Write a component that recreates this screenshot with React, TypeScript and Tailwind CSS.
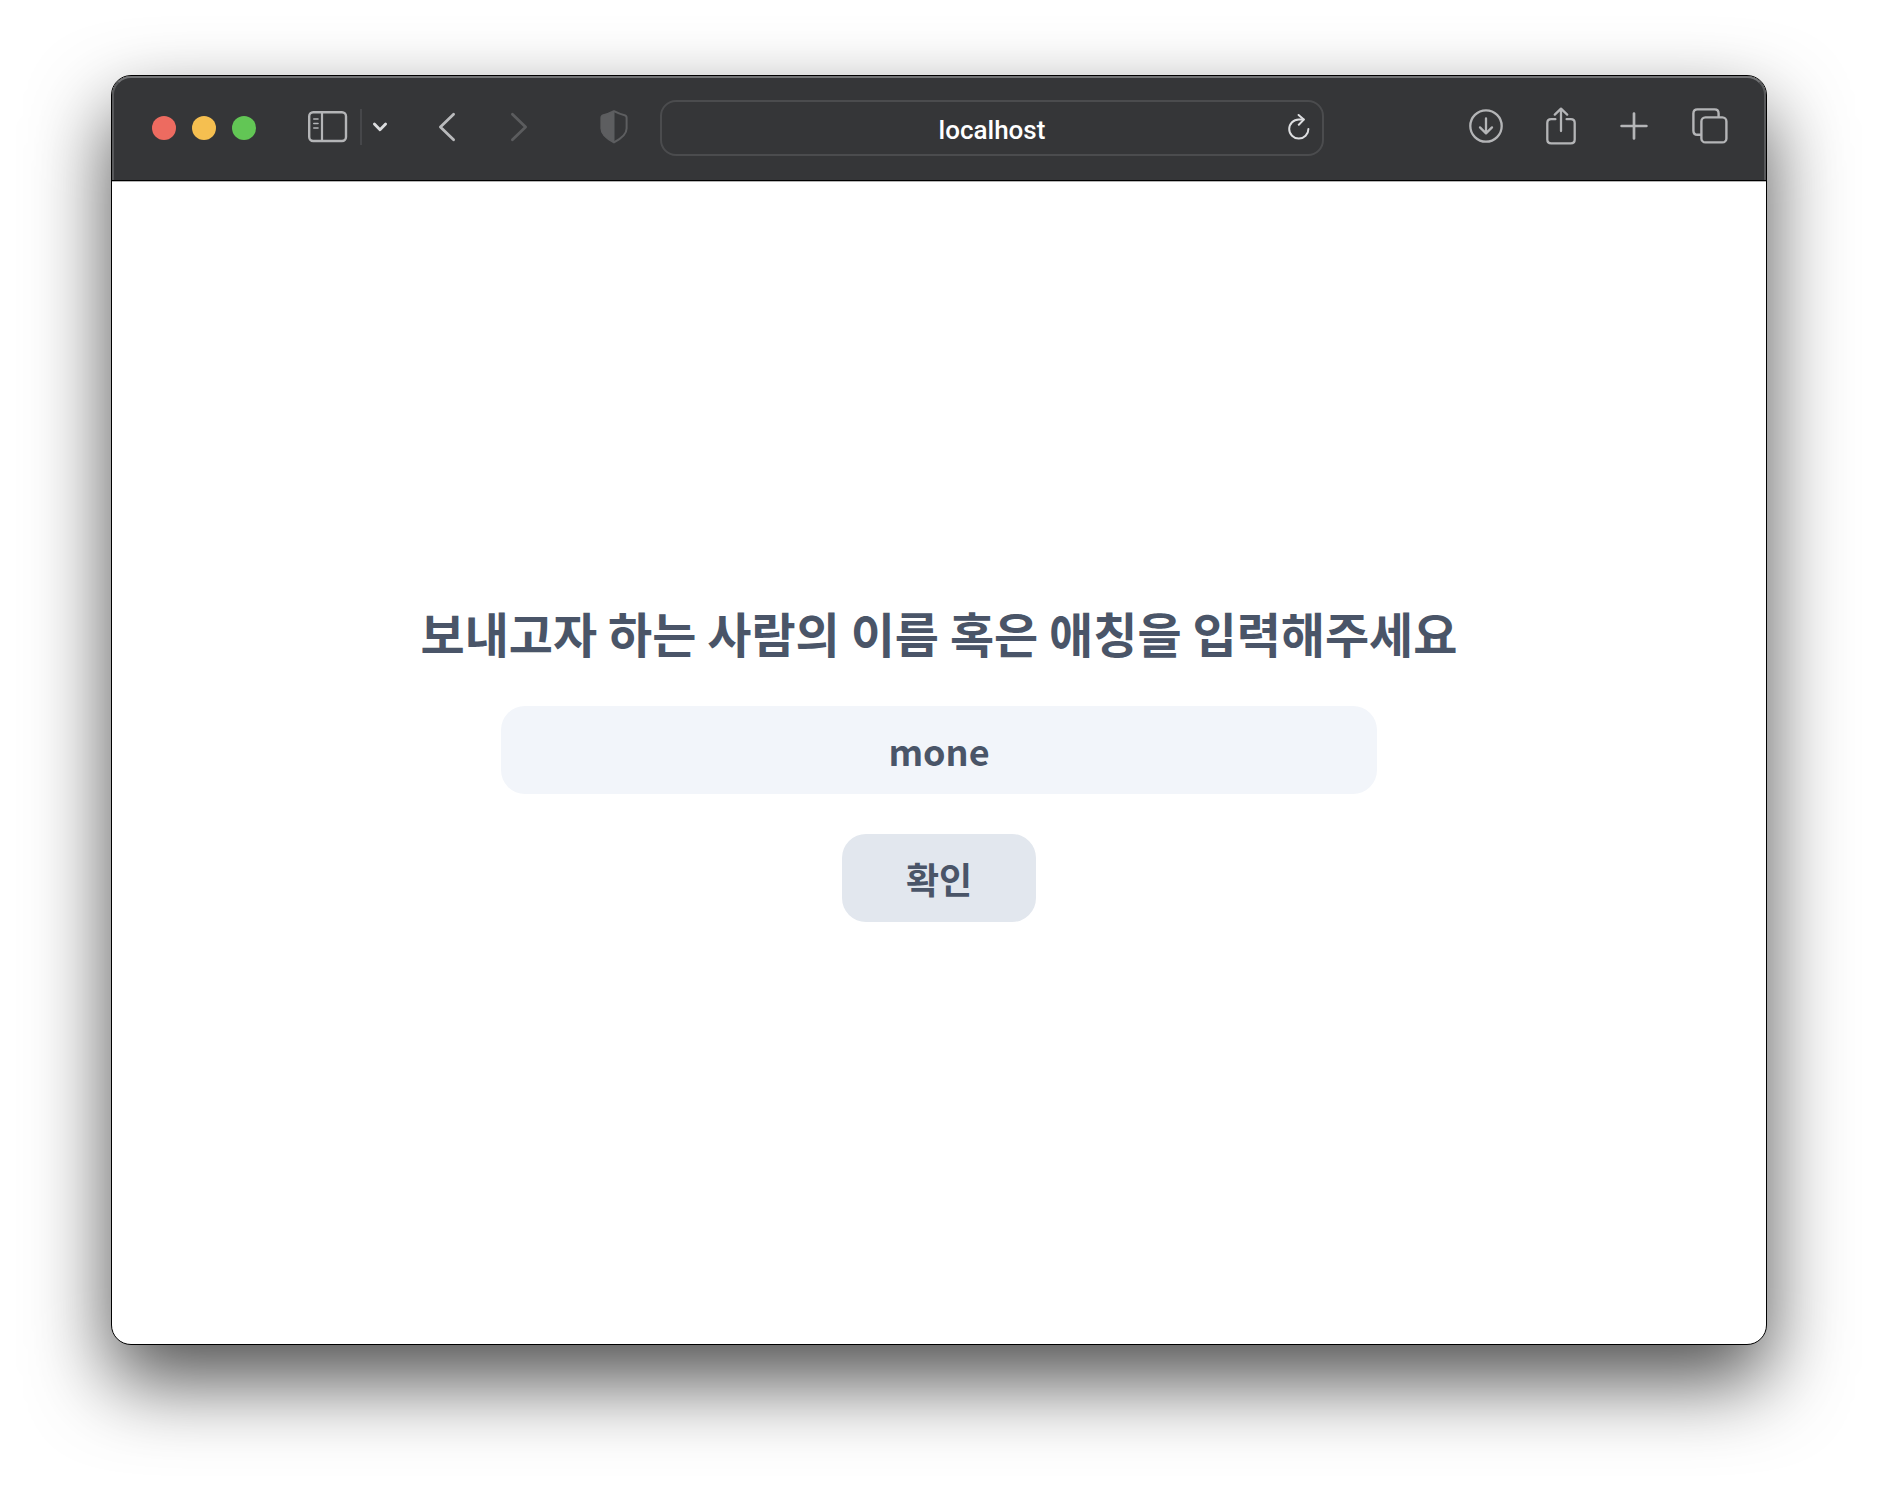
import { useState } from "react";

function SidebarIcon() {
  return (
    <svg width="40" height="32" viewBox="0 0 40 32" fill="none" stroke="#b4b5b7" strokeLinecap="round">
      <rect x="1.2" y="1.2" width="36.8" height="28.8" rx="4" strokeWidth="2.4" />
      <path d="M14 1.5V30" strokeWidth="2.2" strokeLinecap="butt" />
      <path d="M5.8 8H10M5.8 12.5H10M5.8 17H10" strokeWidth="1.6" />
    </svg>
  );
}

function ChevronDownIcon() {
  return (
    <svg width="16" height="12" viewBox="0 0 16 12" fill="none" stroke="#dcdddf" strokeWidth="2.8" strokeLinecap="round" strokeLinejoin="round">
      <path d="M2.4 3L8 8.8L13.6 3" />
    </svg>
  );
}

function BackIcon() {
  return (
    <svg width="18" height="30" viewBox="0 0 18 30" fill="none" stroke="#b9babc" strokeWidth="2.8" strokeLinecap="round" strokeLinejoin="round">
      <path d="M15.6 2.2L2.4 15L15.6 27.8" />
    </svg>
  );
}

function ForwardIcon() {
  return (
    <svg width="18" height="30" viewBox="0 0 18 30" fill="none" stroke="#5b5c5e" strokeWidth="2.8" strokeLinecap="round" strokeLinejoin="round">
      <path d="M2.4 2.2L15.6 15L2.4 27.8" />
    </svg>
  );
}

function ShieldIcon() {
  const outline =
    "M14 1.2C17.4 3 21 4.4 24.6 5.2Q26.6 5.7 26.6 7.8V18.6C26.6 24.6 21 28.8 14 32.4C7 28.8 1.4 24.6 1.4 18.6V7.8Q1.4 5.7 3.4 5.2C7 4.4 10.6 3 14 1.2Z";
  return (
    <svg width="28" height="34" viewBox="0 0 28 34" fill="none" stroke="#5d5e60" strokeWidth="2" strokeLinejoin="round">
      <path d={outline} />
      <path d="M14 1.2V32.4C7 28.8 1.4 24.6 1.4 18.6V7.8Q1.4 5.7 3.4 5.2C7 4.4 10.6 3 14 1.2Z" fill="#5d5e60" strokeWidth="1" />
    </svg>
  );
}

function ReloadIcon() {
  return (
    <svg width="22" height="26" viewBox="0 0 22 26" fill="none" stroke="#dddee0" strokeWidth="2" strokeLinecap="round" strokeLinejoin="round">
      <path d="M20.4 15A9.6 9.6 0 1 1 10.8 5.4H15.6" />
      <path d="M10.6 1L15.8 5.6L10.8 10.8" />
    </svg>
  );
}

function DownloadIcon() {
  return (
    <svg width="34" height="34" viewBox="0 0 34 34" fill="none" stroke="#b4b5b7" strokeWidth="2.3" strokeLinecap="round" strokeLinejoin="round">
      <circle cx="17" cy="17" r="15.7" />
      <path d="M17 9.5V24M11 18.4L17 24.4L23 18.4" />
    </svg>
  );
}

function ShareIcon() {
  return (
    <svg width="30" height="38" viewBox="0 0 30 38" fill="none" stroke="#b4b5b7" strokeWidth="2.3" strokeLinecap="round" strokeLinejoin="round">
      <path d="M9.4 12.2H5.2Q1.3 12.2 1.3 16V32.4Q1.3 36.3 5.2 36.3H24.8Q28.7 36.3 28.7 32.4V16Q28.7 12.2 24.8 12.2H20.6" />
      <path d="M15 24V2M8.8 7.6L15 1.6L21.2 7.6" />
    </svg>
  );
}

function PlusIcon() {
  return (
    <svg width="28" height="28" viewBox="0 0 28 28" fill="none" stroke="#b4b5b7" strokeWidth="2.7" strokeLinecap="round">
      <path d="M14 1.6V26.4M1.6 14H26.4" />
    </svg>
  );
}

function TabsIcon() {
  return (
    <svg width="36" height="36" viewBox="0 0 36 36" fill="none" stroke="#b4b5b7" strokeWidth="2.4" strokeLinejoin="round">
      <path d="M9.4 26.8H5.4Q1.4 26.8 1.4 22.8V5.4Q1.4 1.4 5.4 1.4H22.6Q26.6 1.4 26.6 5.4V9.4" />
      <rect x="9.4" y="9.4" width="25" height="25" rx="4" />
    </svg>
  );
}

function Toolbar() {
  const [address, setAddress] = useState("localhost");
  return (
    <header className="border-b border-black bg-[#353638]">
      <div className="flex h-[104px] items-center rounded-t-[19px] border-x-2 border-t-2 border-x-[#58595b] border-t-[#737476] pr-9 pb-0.5 pl-[38px]">
        <div className="flex gap-4">
          <button type="button" aria-label="Close" className="size-6 rounded-full bg-[#ed6b60]" />
          <button type="button" aria-label="Minimize" className="size-6 rounded-full bg-[#f5bf50]" />
          <button type="button" aria-label="Zoom" className="size-6 rounded-full bg-[#62c655]" />
        </div>
        <div className="ml-[52px] flex items-center pb-0.5">
          <button type="button" aria-label="Sidebar"><SidebarIcon /></button>
          <span className="ml-3 h-9 w-0.5 bg-[#46474a]" />
          <button type="button" aria-label="Tab groups" className="ml-2.5"><ChevronDownIcon /></button>
        </div>
        <nav className="ml-[50px] flex items-center gap-[54px] pb-0.5">
          <button type="button" aria-label="Back"><BackIcon /></button>
          <button type="button" aria-label="Forward"><ForwardIcon /></button>
        </nav>
        <button type="button" aria-label="Privacy report" className="ml-[72px] pb-0.5"><ShieldIcon /></button>
        <div className="ml-8 flex h-14 min-w-0 flex-1 items-center rounded-2xl border-2 border-[#4b4c4e] pr-3 pl-[34px]">
          <input
            aria-label="Address"
            value={address}
            onChange={(e) => setAddress(e.target.value)}
            className="min-w-0 flex-1 bg-transparent pt-1 text-center font-[Roboto,sans-serif] text-[26px] font-medium text-white outline-none"
          />
          <button type="button" aria-label="Reload" className="pb-0.5"><ReloadIcon /></button>
        </div>
        <div className="ml-[145px] flex items-center pb-1">
          <button type="button" aria-label="Downloads"><DownloadIcon /></button>
          <button type="button" aria-label="Share" className="ml-[43px]"><ShareIcon /></button>
          <button type="button" aria-label="New tab" className="ml-11"><PlusIcon /></button>
          <button type="button" aria-label="Tab overview" className="ml-11"><TabsIcon /></button>
        </div>
      </div>
    </header>
  );
}

export default function App() {
  const [name, setName] = useState("mone");
  return (
    <div className="flex min-h-screen flex-col bg-white px-[111px] pt-[75px] pb-[147px]">
      <div className="flex flex-1 flex-col overflow-hidden rounded-[20px] border border-black bg-white shadow-[0_36px_80px_rgba(0,0,0,0.69)]">
        <Toolbar />
        <main className="flex flex-1 items-center justify-center border-t border-[#b5b5b5] font-['Noto_Sans_CJK_KR',sans-serif] font-bold text-[#4a5568]">
          <form onSubmit={(e) => e.preventDefault()} className="flex flex-col items-center">
            <label htmlFor="name" className="mb-[46px] text-5xl leading-[56px]">
              보내고자 하는 사람의 이름 혹은 애칭을 입력해주세요
            </label>
            <input
              id="name"
              value={name}
              onChange={(e) => setName(e.target.value)}
              className="mb-10 h-[88px] w-[876px] max-w-full rounded-3xl bg-[#f2f5fa] text-center text-4xl outline-none"
            />
            <button type="submit" className="h-[88px] rounded-3xl bg-[#e2e7ee] px-16 text-4xl">
              확인
            </button>
          </form>
        </main>
      </div>
    </div>
  );
}
